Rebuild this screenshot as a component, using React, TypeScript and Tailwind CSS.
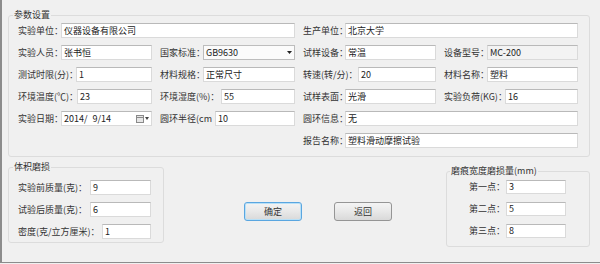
import clsx from "clsx";

interface FieldProps {
  label: string;
  lw: string;
  value?: string;
  span?: boolean;
  start?: string;
  disabled?: boolean;
  kind?: "text" | "select" | "date";
}

const Box = ({ value, disabled }: { value?: string; disabled?: boolean }) => (
  <div
    className={clsx(
      "flex-1 h-full border border-[#dadada] border-t-[#b9b9b9] pl-[2px] leading-[13px] text-[#222] whitespace-pre overflow-hidden",
      disabled ? "bg-[#f3f3f3]" : "bg-white"
    )}
  >
    {value}
  </div>
);

const Field: React.FC<FieldProps> = ({ label, lw, value, span, start, disabled, kind = "text" }) => (
  <div className={clsx("flex items-center h-[15px]", span && "col-span-2", start)}>
    <span className={clsx("shrink-0 whitespace-nowrap", lw)}>{label}</span>
    {kind === "text" && <Box value={value} disabled={disabled} />}
    {kind === "select" && (
      <div className="flex-1 h-full flex items-center justify-between bg-[#fbfbfb] border border-[#bdbdbd] pl-[2px] pr-[2px] text-[#222]">
        <span className="leading-[13px]">{value}</span>
        <svg width="5" height="3" viewBox="0 0 5 3">
          <path d="M0 0h5L2.5 3z" fill="#222" />
        </svg>
      </div>
    )}
    {kind === "date" && (
      <div className="flex-1 h-full flex items-center justify-between bg-white border border-[#dadada] border-t-[#b9b9b9] pl-[2px] pr-[2px] text-[#222]">
        <span className="leading-[13px] whitespace-pre">{value}</span>
        <span className="flex items-center gap-[1px]">
          <svg width="8" height="8" viewBox="0 0 8 8">
            <rect x="0.5" y="0.5" width="7" height="7" fill="#e6e6e6" stroke="#8a8a8a" />
            <path d="M1 2.5h6" stroke="#8a8a8a" />
          </svg>
          <svg width="4" height="3" viewBox="0 0 4 3">
            <path d="M0 0h4L2 3z" fill="#444" />
          </svg>
        </span>
      </div>
    )}
  </div>
);

const Row = ({ label, value, lw }: { label: string; value: string; lw: string }) => (
  <div className="flex items-center h-[15px]">
    <span className={clsx("shrink-0 whitespace-nowrap", lw)}>{label}</span>
    <Box value={value} />
  </div>
);

const Button = ({ text, focused }: { text: string; focused?: boolean }) => (
  <button
    className={clsx(
      "w-[58px] h-[19px] rounded-[3px] border bg-linear-to-b from-[#f4f4f4] via-[#e8e8e8] to-[#d9d9d9] text-[#333] text-[9px] leading-none",
      focused ? "border-[#5aa6e0] shadow-[inset_0_0_0_1px_#b8e0f7]" : "border-[#959595]"
    )}
  >
    {text}
  </button>
);

export default function App() {
  return (
    <div className="w-[600px] h-[264px] bg-[#f0f0f0] text-[9px] text-[#333] font-['Noto_Sans_CJK_SC','Noto_Sans',sans-serif]">
      <div className="h-[263px] border-l-2 border-b border-[#8c8c8c] pt-[9px] pl-[6px] pr-[10px]">
        <fieldset className="w-[582px] border border-[#dcdcdc] rounded-[3px] p-0">
          <legend className="ml-[4px] px-[1px] leading-[12px]">参数设置</legend>
          <div className="grid grid-cols-[134px_135px_133px_134px] gap-x-[8px] gap-y-[7px] pl-[9px] pr-[11px] pt-[2px] pb-[8px]">
            <Field label="实验单位：" lw="w-[43px]" value="仪器设备有限公司" span />
            <Field label="生产单位：" lw="w-[42px]" value="北京大学" span />

            <Field label="实验人员：" lw="w-[43px]" value="张书恒" />
            <Field label="国家标准：" lw="w-[43px]" value="GB9630" kind="select" />
            <Field label="试样设备：" lw="w-[42px]" value="常温" />
            <Field label="设备型号：" lw="w-[43px]" value="MC-200" disabled />

            <Field label="测试时限(分)：" lw="w-[58px]" value="1" />
            <Field label="材料规格：" lw="w-[43px]" value="正常尺寸" />
            <Field label="转速(转/分)：" lw="w-[55px]" value="20" />
            <Field label="材料名称：" lw="w-[43px]" value="塑料" />

            <Field label="环境温度(℃)：" lw="w-[59px]" value="23" />
            <Field label="环境湿度(%)：" lw="w-[61px]" value="55" />
            <Field label="试样表面：" lw="w-[42px]" value="光滑" />
            <Field label="实验负荷(KG)：" lw="w-[61px]" value="16" />

            <Field label="实验日期：" lw="w-[43px]" value={"2014/\u20079/14"} kind="date" />
            <Field label="圆环半径(cm" lw="w-[55px]" value="10" />
            <Field label="圆环信息：" lw="w-[42px]" value="无" span />

            <Field label="报告名称：" lw="w-[42px]" value="塑料滑动摩擦试验" span start="col-start-3" />
          </div>
        </fieldset>

        <div className="flex items-start mt-[4px]">
          <fieldset className="w-[156px] border border-[#dcdcdc] rounded-[3px] p-0">
            <legend className="ml-[4px] px-[1px] leading-[12px]">体积磨损</legend>
            <div className="flex flex-col gap-[7px] pl-[9px] pr-[12px] pt-[7px] pb-[3px]">
              <Row label="实验前质量(克)：" lw="w-[72px]" value="9" />
              <Row label="试验后质量(克)：" lw="w-[72px]" value="6" />
              <Row label="密度(克/立方厘米)：" lw="w-[84px]" value="1" />
            </div>
          </fieldset>

          <div className="flex-1 flex gap-[32px] pl-[80px] mt-[41px]">
            <Button text="确定" focused />
            <Button text="返回" />
          </div>

          <fieldset className="w-[144px] mt-[4px] border border-[#dcdcdc] rounded-[3px] p-0">
            <legend className="ml-[3px] px-[1px] leading-[12px]">磨痕宽度磨损量(mm)</legend>
            <div className="flex flex-col gap-[8px] pr-[23px] pt-[3px] pb-[8px]">
              {[
                ["第一点：", "3"],
                ["第二点：", "5"],
                ["第三点：", "8"],
              ].map(([l, v]) => (
                <div key={l} className="flex items-center justify-end h-[14px]">
                  <span className="whitespace-nowrap mr-[1px]">{l}</span>
                  <div className="w-[60px] h-full bg-white border border-[#dadada] border-t-[#b9b9b9] pl-[2px] leading-[12px] text-[#222]">
                    {v}
                  </div>
                </div>
              ))}
            </div>
          </fieldset>
        </div>
      </div>
    </div>
  );
}
